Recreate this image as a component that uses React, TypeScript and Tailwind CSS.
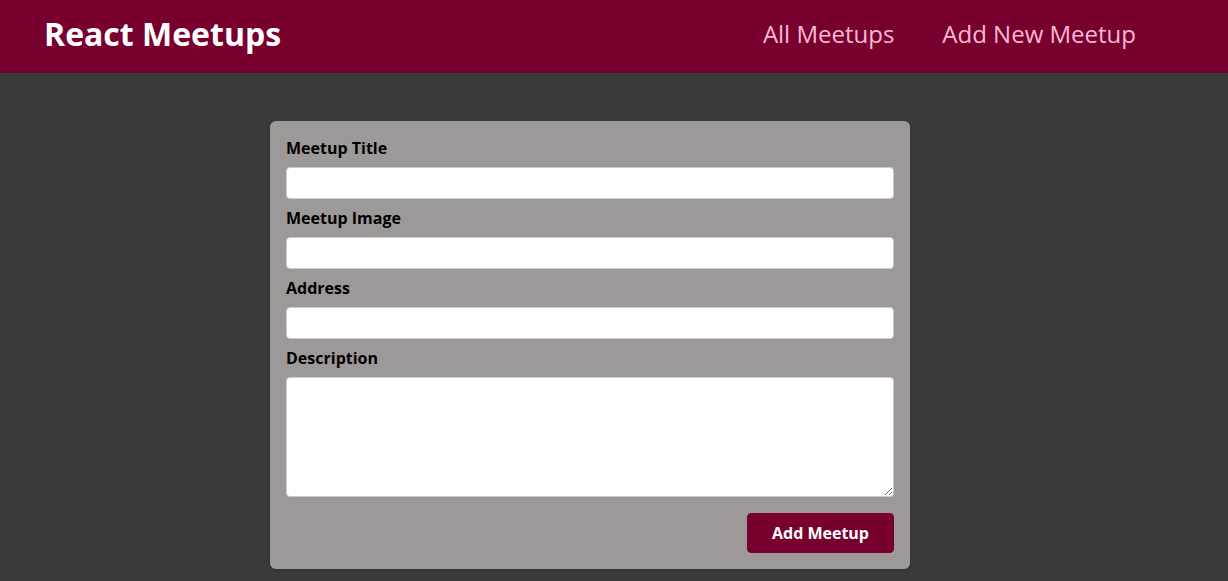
export default function App() {
  const fieldClass =
    "block w-full rounded-[4px] border border-[#cccccc] bg-white px-1 text-base text-black outline-none";

  return (
    <div className="min-h-screen bg-[#3b3b3b] font-['Open_Sans',sans-serif]">
      <header className="flex h-[73px] w-full items-center justify-between bg-[#77002e] pb-[5px] pl-[44px] pr-[92px]">
        <div className="text-[32px] font-bold leading-none text-white">React Meetups</div>
        <nav>
          <ul className="flex items-baseline">
            <li>
              <a href="#" className="text-2xl text-[#fcb8d2]">All Meetups</a>
            </li>
            <li className="ml-12">
              <a href="#" className="text-2xl text-[#fcb8d2]">Add New Meetup</a>
            </li>
          </ul>
        </nav>
      </header>

      <main className="mt-12 ml-[270px] w-[640px]">
        <form className="rounded-[6px] bg-[#9e9999] p-4 shadow-[0_1px_4px_rgba(0,0,0,0.2)]">
          <div className="mb-2">
            <label htmlFor="title" className="mb-2 block text-base font-bold leading-[22px] text-black">
              Meetup Title
            </label>
            <input id="title" type="text" className={`${fieldClass} h-[32px]`} />
          </div>
          <div className="mb-2">
            <label htmlFor="image" className="mb-2 block text-base font-bold leading-[22px] text-black">
              Meetup Image
            </label>
            <input id="image" type="url" className={`${fieldClass} h-[32px]`} />
          </div>
          <div className="mb-2">
            <label htmlFor="address" className="mb-2 block text-base font-bold leading-[22px] text-black">
              Address
            </label>
            <input id="address" type="text" className={`${fieldClass} h-[32px]`} />
          </div>
          <div>
            <label htmlFor="description" className="mb-2 block text-base font-bold leading-[22px] text-black">
              Description
            </label>
            <textarea id="description" rows={5} className={`${fieldClass} h-[120px] py-1`} />
          </div>
          <div className="mt-4 text-right">
            <button
              type="button"
              className="h-[40px] rounded-[4px] border border-[#77002e] bg-[#77002e] px-6 text-base font-bold leading-[22px] text-white"
            >
              Add Meetup
            </button>
          </div>
        </form>
      </main>
    </div>
  );
}
